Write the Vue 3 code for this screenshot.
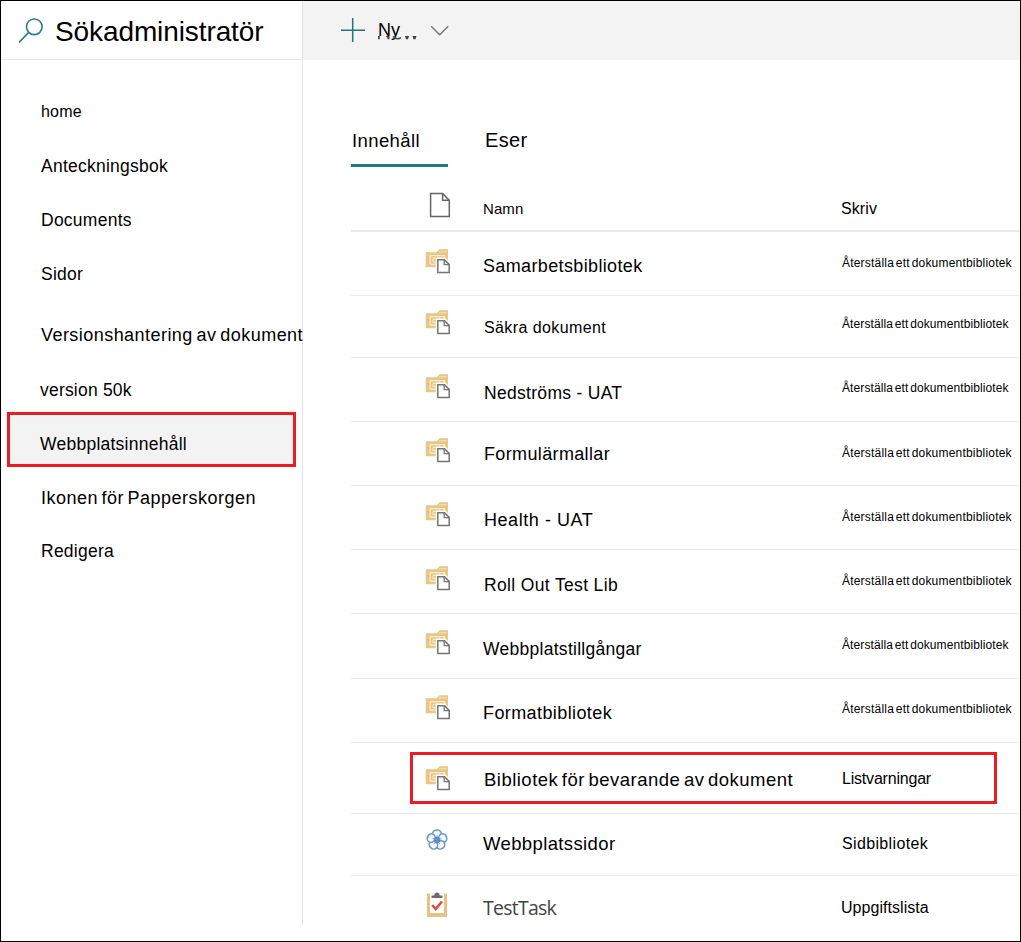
<script setup>
const nav = [
  { key: 'home', label: 'home' },
  { key: 'notebook', label: 'Anteckningsbok' },
  { key: 'documents', label: 'Documents' },
  { key: 'pages', label: 'Sidor' },
  { key: 'versioning', label: 'Versionshantering av dokument' },
  { key: 'version50', label: 'version 50k' },
  { key: 'contents', label: 'Webbplatsinnehåll' },
  { key: 'recycle', label: 'Ikonen för Papperskorgen' },
  { key: 'edit', label: 'Redigera' }
]
const library = 'Återställa ett dokumentbibliotek'
const rows = [
  { key: 'collab', name: 'Samarbetsbibliotek', type: library, icon: 'library' },
  { key: 'secure', name: 'Säkra dokument', type: library, icon: 'library' },
  { key: 'downstream', name: 'Nedströms - UAT', type: library, icon: 'library' },
  { key: 'forms', name: 'Formulärmallar', type: library, icon: 'library' },
  { key: 'health', name: 'Health - UAT', type: library, icon: 'library' },
  { key: 'rollout', name: 'Roll Out Test Lib', type: library, icon: 'library' },
  { key: 'assets', name: 'Webbplatstillgångar', type: library, icon: 'library' },
  { key: 'style', name: 'Formatbibliotek', type: library, icon: 'library' },
  { key: 'hold', name: 'Bibliotek för bevarande av dokument', type: 'Listvarningar', icon: 'library' },
  { key: 'sitepages', name: 'Webbplatssidor', type: 'Sidbibliotek', icon: 'flower' },
  { key: 'task', name: 'TestTask', type: 'Uppgiftslista', icon: 'task' }
]
const petals = [0, 72, 144, 216, 288]
</script>

<template>
  <div class="window">
    <aside class="sidebar">
      <header class="brand">
        <svg class="search" width="26" height="26" viewBox="0 0 26 26">
          <circle cx="16.3" cy="8.8" r="7.8" />
          <path d="M10.8 14.4 L1 24.4" />
        </svg>
        <h1>Sökadministratör</h1>
      </header>
      <nav>
        <a v-for="item in nav" :key="item.key" :class="['link', item.key]">{{ item.label }}</a>
      </nav>
    </aside>

    <main>
      <div class="toolbar">
        <svg class="plus" width="24" height="24" viewBox="0 0 24 24"><path d="M0 12.3H24M11.7 0V24" /></svg>
        <span class="new">
          Ny
          <svg class="trace" width="40" height="4" viewBox="0 0 40 4">
            <path d="M0 0H1.8V3.3H0ZM8 0H11.5V3.3H10ZM27 0H31L30 3.3H28ZM34.5 0H38.5L37.5 3.3H35.5Z" />
            <path class="curve" d="M15 .3Q18.5 4.4 23 1.6" />
          </svg>
        </span>
        <svg class="chevron" width="20" height="12" viewBox="0 0 20 12"><path d="M1.2 1.2L9.7 9.8L18.2 1.2" /></svg>
      </div>

      <div class="tabs">
        <span class="tab active">Innehåll</span>
        <span class="tab second">Eser</span>
      </div>

      <section class="table">
        <div class="row head">
          <svg class="icon" width="26" height="26" viewBox="0 0 26 26">
            <path class="page" d="M5.6 1.6H17.6L24.3 8.3V24.4H5.6Z" />
            <path class="page" d="M17.6 1.6V8.3H24.3" />
          </svg>
          <span class="name">Namn</span>
          <span class="type">Skriv</span>
        </div>

        <div v-for="row in rows" :key="row.key" :class="['row', row.key]">
          <svg v-if="row.icon === 'library'" class="icon" width="26" height="26" viewBox="0 0 26 26">
            <path class="folder" d="M.7 3.3H11.5L14.5 .2H23V18.2H.7Z" />
            <path class="tab-line" d="M14 2.8H21.8" />
            <path class="inner" d="M5.2 15.4V6.6H19.5V9" />
            <path class="inner" d="M5.2 15.2H11" />
            <path class="small" d="M8.2 9.2H16M8.2 9.2V13M8.2 12.6H12M11.5 10.9H14" />
            <path class="halo" d="M11.6 18.2V9.4H20L23 12.4" />
            <path class="sheet" d="M12.8 10.7H19.4L24.2 15.4V23.6H12.8Z" />
            <path class="fold" d="M19.2 10.9V15.6H24" />
          </svg>
          <svg v-else-if="row.icon === 'flower'" class="icon" width="26" height="26" viewBox="0 0 26 26">
            <ellipse v-for="a in petals" :key="a" class="petal" cx="12" cy="4.9" rx="4.4" ry="3.9" :transform="`rotate(${a} 12 11)`" />
            <circle class="core" cx="12" cy="11" r="3" />
            <path class="veins" d="M12 11V6.5M12 11L16.3 9.6M12 11L14.7 14.7M12 11L9.3 14.7M12 11L7.7 9.6" />
          </svg>
          <svg v-else class="icon" width="26" height="26" viewBox="0 0 26 26">
            <path class="board" d="M2 1.5H22V25H2Z" />
            <path class="paper" d="M5 1.5H19V21H5Z" />
            <path class="clip" d="M6.5 6V3.4H9.3Q9.7 .6 12 .6T14.7 3.4H17.5V6Z" />
            <path class="check" d="M7.2 13L10.7 17L17 9.5" />
          </svg>
          <span class="name">{{ row.name }}</span>
          <span class="type">{{ row.type }}</span>
        </div>
      </section>
    </main>
  </div>
</template>

<style>
body { margin: 0; background: #fff; }
</style>

<style scoped>
.window {
  box-sizing: border-box;
  width: 1021px;
  height: 942px;
  border: 1px solid #000;
  background: #fff;
  color: #000;
  font-family: "Liberation Sans", Arial, sans-serif;
  display: flex;
  overflow: hidden;
}
svg { display: block; fill: none; }
.sidebar {
  box-sizing: border-box;
  width: 302px;
  height: 924px;
  flex: none;
  border-right: 1px solid #e6e6e6;
}
.brand {
  height: 58px;
  border-bottom: 1px solid #e6e6e6;
  display: flex;
  align-items: flex-start;
}
.search { margin: 17px 0 0 17px; stroke: #2f7f80; stroke-width: 1.6; }
h1 { margin: 13px 0 0 11px; font-size: 28px; line-height: 36px; font-weight: 400; letter-spacing: -.1px; }
nav { display: flex; flex-direction: column; padding-top: 42px; }
.link {
  position: relative;
  padding-left: 40px;
  margin-bottom: 34px;
  font-size: 17.5px;
  line-height: 20px;
  letter-spacing: .25px;
  white-space: nowrap;
}
.home { font-size: 16px; letter-spacing: .2px; margin-bottom: 34px; }
.pages { margin-bottom: 41px; }
.versioning { font-size: 18px; letter-spacing: .45px; word-spacing: -1.6px; margin-bottom: 35px; }
.version50 { padding-left: 39px; margin-bottom: 12px; letter-spacing: .2px; }
.contents {
  box-sizing: border-box;
  width: 289px;
  height: 55px;
  margin: 0 0 21px 6px;
  padding: 19px 0 0 30px;
  border: 3px solid #ed1c24;
  background: #f3f3f3;
}
.recycle { font-size: 18px; letter-spacing: .5px; word-spacing: -2px; margin-bottom: 33px; }

main { flex: 1; min-width: 0; }
.toolbar { height: 59px; background: #f3f3f3; display: flex; align-items: flex-start; }
.plus { margin: 17px 0 0 38px; stroke: #1f7778; stroke-width: 1.5; }
.new { position: relative; width: 40px; margin: 19px 0 0 12px; font-size: 18px; line-height: 20px; padding-left: 1px; box-sizing: border-box; }
.trace { position: absolute; left: 1px; top: 16px; fill: #444; }
.trace .curve { fill: none; stroke: #444; stroke-width: 1.6; }
.chevron { margin: 24px 0 0 13px; stroke: #777; stroke-width: 1.4; }

.tabs { display: flex; height: 107px; padding-left: 48px; }
.tab { box-sizing: border-box; padding-top: 70px; line-height: 20px; white-space: nowrap; }
.active { width: 97px; padding-left: 1px; padding-top: 71px; border-bottom: 3px solid #1b7f80; font-size: 18.5px; letter-spacing: .4px; }
.second { margin-left: 37px; font-size: 20px; letter-spacing: .35px; }

.table { margin-left: 48px; }
.row {
  position: relative;
  box-sizing: border-box;
  height: 64px;
  border-bottom: 1px solid #ececec;
  display: grid;
  grid-template-columns: 58px 359px 1fr;
  padding-left: 74px;
  align-items: start;
  line-height: 20px;
  white-space: nowrap;
}
.icon { margin-top: 16px; }
.name { margin-top: 25px; padding-left: 1px; font-size: 18px; letter-spacing: .36px; }
.type { margin-top: 21px; font-size: 12px; letter-spacing: .2px; word-spacing: -1.7px; }

.head { height: 65px; border-bottom: 2px solid #e9e9e9; }
.head .icon { margin-top: 25px; }
.head .name { margin-top: 32px; padding-left: 0; font-size: 15px; letter-spacing: .1px; }
.head .type { margin-top: 32px; margin-left: -1px; font-size: 16px; letter-spacing: .1px; }
.collab .icon { margin-top: 17px; }
.collab .name { margin-top: 24px; padding-left: 0; }
.secure { height: 62px; }
.secure .icon { margin-top: 14px; }
.secure .name { margin-top: 22px; font-size: 16px; letter-spacing: .4px; }
.secure .type { margin-top: 18px; letter-spacing: .1px; }
.downstream .name { font-size: 17.5px; letter-spacing: .3px; }
.downstream .type { margin-top: 20px; letter-spacing: .1px; }
.forms .name { margin-top: 22px; }
.health .name { margin-top: 24px; letter-spacing: .55px; }
.rollout .name { font-size: 17.5px; letter-spacing: .35px; }
.assets { height: 65px; }
.assets .name { padding-left: 0; font-size: 17.5px; letter-spacing: .28px; }
.assets .type { letter-spacing: .1px; }
.style .name { margin-top: 24px; padding-left: 0; letter-spacing: .4px; }
.style .type { margin-top: 20px; }
.hold { height: 71px; }
.hold::after {
  content: "";
  position: absolute;
  box-sizing: border-box;
  left: 59px;
  top: 9px;
  width: 587px;
  height: 52px;
  border: 3px solid #ed1c24;
}
.hold .icon { margin-top: 23px; }
.hold .name { margin-top: 27px; font-size: 18.5px; letter-spacing: .48px; word-spacing: -2px; }
.hold .type { margin-top: 26px; font-size: 16px; letter-spacing: -.2px; }
.sitepages { height: 62px; }
.sitepages .icon { margin-top: 15px; }
.sitepages .name { margin-top: 20px; padding-left: 0; font-size: 18.5px; letter-spacing: .38px; }
.sitepages .type { margin-top: 20px; font-size: 16px; letter-spacing: .35px; }
.task { border-bottom: 0; }
.task .name { margin-top: 22px; padding-left: 0; font-family: "Open Sans", sans-serif; font-size: 19.5px; letter-spacing: -.75px; color: #444; }
.task .type { margin-top: 22px; margin-left: -1px; font-size: 16px; letter-spacing: .05px; }

.page { stroke: #666; stroke-width: 1.5; }
.folder { fill: #eac584; }
.tab-line { stroke: #f6e3c0; stroke-width: 1; }
.inner { stroke: #f8e9cf; stroke-width: 1.4; }
.small { stroke: #f8e9cf; stroke-width: 1.1; }
.halo { stroke: #fff; stroke-width: 1.6; }
.sheet { fill: #fff; stroke: #757575; stroke-width: 1.5; }
.fold { stroke: #757575; stroke-width: 1.3; }
.petal { fill: #f3f8fd; stroke: #6f98ca; stroke-width: 1.6; }
.core { fill: #4d80bd; }
.veins { stroke: #6f98ca; stroke-width: 1.1; }
.board { fill: #e9c283; }
.paper { fill: #fff; }
.clip { fill: #6c6c70; }
.check { stroke: #d6533a; stroke-width: 2.6; }
</style>
